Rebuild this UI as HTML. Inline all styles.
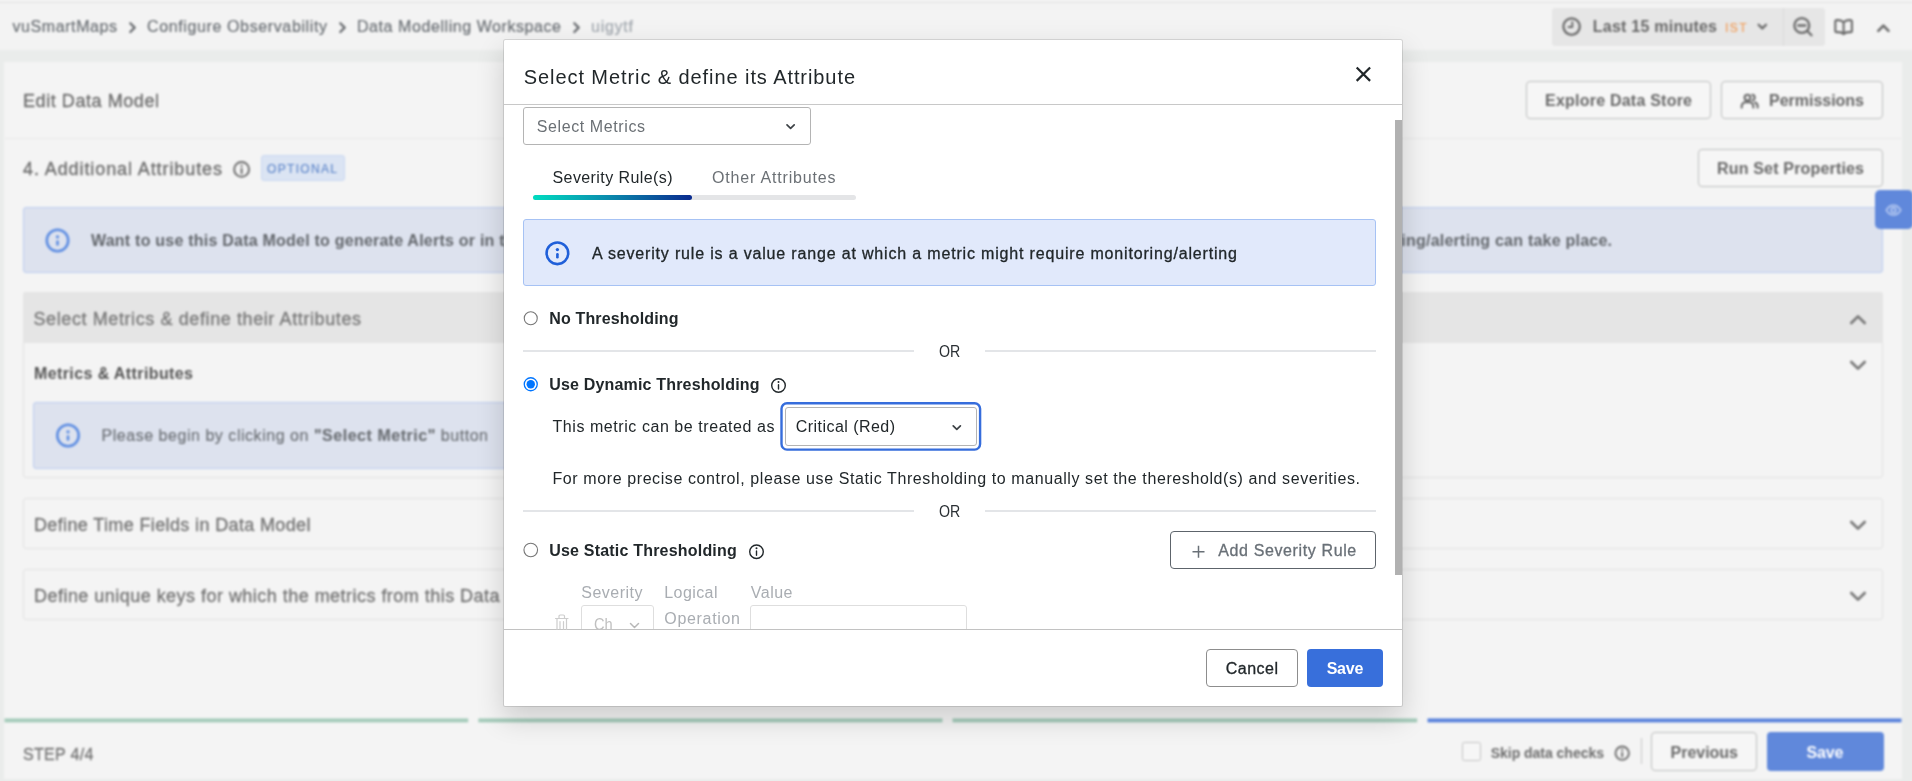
<!DOCTYPE html>
<html lang="en">
<head>
<meta charset="utf-8">
<title>vuSmartMaps - Data Modelling Workspace</title>
<style>
*{box-sizing:border-box}
html,body{margin:0;padding:0}
body{width:1912px;height:781px;overflow:hidden;position:relative;background:#eaeceb;font-family:"Liberation Sans",sans-serif;}
.t{position:absolute;white-space:nowrap;line-height:1;}
.abs{position:absolute}
#bg{position:absolute;left:0;top:0;width:1912px;height:781px;filter:blur(0.85px);}
#bgfill{position:absolute;left:-20px;top:-20px;width:1952px;height:821px;background:#eaeceb}
.topbar{left:-20px;top:-20px;width:1952px;height:69.5px;background:#f3f3f3}
.topline{left:-20px;top:2px;width:1952px;height:1px;background:#e2e2e2}
.timegrp{left:1551.5px;top:7.5px;width:273px;height:38px;background:#e6e6e6;border-radius:3px}
.timesep{left:1782.5px;top:7.5px;width:1px;height:38px;background:#dadada}
.card{left:4px;top:62px;width:1898px;height:717px;background:#f4f4f4}
.hsep{left:5px;top:137.5px;width:1896px;height:1px;background:#e7e7e7}
.btn{border:1px solid #bdbfbe;border-radius:4px;background:#f6f6f6}
.badge{left:261px;top:155px;width:83.500px;height:26px;background:#dbe4f3;border:1px solid #c9d8f2;border-radius:3px}
.banner{background:#dde2ee;border:1px solid #bccdf0;border-radius:3px}
.acc{border:1px solid #e2e2e2;border-radius:3px}
.acchead{left:23px;top:292px;width:1860px;height:51px;background:#e5e5e5;border-radius:3px 3px 0 0}
.prog{top:718px;height:4.4px}
.eye{left:1875px;top:190px;width:37.500px;height:39px;background:#6088db;border-radius:5px}
.chk{left:1462px;top:742px;width:19px;height:19px;border:1px solid #c2c2c2;background:#f6f6f6;border-radius:2.5px}
.vsep{left:1641px;top:738px;width:1px;height:26px;background:#c6c6c6}

#modal{position:absolute;left:503px;top:39px;width:900px;height:668px;background:#fff;border:1px solid rgba(0,0,0,.11);border-radius:2.5px;box-shadow:0 12px 28px rgba(0,0,0,.16);background-clip:padding-box}
#mlayer{position:absolute;left:0;top:0;width:1912px;height:781px;will-change:transform}
.mline{background:#c8c8c8;height:1px;left:504px;width:898px}
.sel{border:1px solid #b4b4b4;border-radius:3px;background:#fff}
.tabbar{left:533px;top:195px;width:323px;height:5px;border-radius:2.5px;background:#e4e5e7}
.tabact{left:533px;top:195px;width:159px;height:5px;border-radius:2.5px;background:linear-gradient(90deg,#00dcc0 0%,#0a8fae 45%,#0a2a8f 100%)}
.info{left:523px;top:219px;width:853px;height:67px;background:#e1e9fb;border:1px solid #a6c2f4;border-radius:3px}
.div{height:2px;background:#e3e5e8}
.scroll{left:1395px;top:120px;width:7px;height:455px;background:#b1b1b1}
.mbtn{border-radius:4px}
</style>
</head>
<body>
<!-- ================= blurred page behind the modal ================= -->
<div id="bg" aria-hidden="true">
  <div id="bgfill"></div>
  <div class="abs topbar"></div>
  <div class="abs topline"></div>
  <div class="abs timegrp"></div>
  <div class="abs timesep"></div>
  <div class="abs card"></div>
  <div class="abs hsep"></div>
  <div class="abs btn" style="left:1526px;top:80.5px;width:184.5px;height:38px"></div>
  <div class="abs btn" style="left:1721px;top:80.5px;width:162px;height:38px"></div>
  <div class="abs btn" style="left:1698px;top:149px;width:185px;height:37.5px"></div>
  <div class="abs badge"></div>
  <div class="abs banner" style="left:23px;top:207px;width:1860px;height:66px"></div>
  <div class="abs acc" style="left:23px;top:292px;width:1860px;height:186px"></div>
  <div class="abs acchead"></div>
  <div class="abs banner" style="left:33px;top:402px;width:900px;height:67px"></div>
  <div class="abs acc" style="left:23px;top:498px;width:1860px;height:51px"></div>
  <div class="abs acc" style="left:23px;top:569px;width:1860px;height:51px"></div>
  <div class="abs chk"></div>
  <div class="abs vsep"></div>
  <div class="abs btn" style="left:1651px;top:732px;width:106px;height:39px"></div>
  <div class="abs" style="left:1767px;top:732px;width:116.500px;height:39px;background:#6088db;border-radius:4px"></div>
  <div class="abs eye"></div>
<span class="t" style="top:19px;font-size:16px;color:#6a6f74;-webkit-text-stroke:0.2px #6a6f74;left:12.50px;letter-spacing:0.580px;">vuSmartMaps</span>
<span class="t" style="top:19px;font-size:16px;color:#6a6f74;-webkit-text-stroke:0.2px #6a6f74;left:147.00px;letter-spacing:0.623px;">Configure Observability</span>
<span class="t" style="top:19px;font-size:16px;color:#6a6f74;-webkit-text-stroke:0.2px #6a6f74;left:357.00px;letter-spacing:0.569px;">Data Modelling Workspace</span>
<span class="t" style="top:19px;font-size:16px;color:#a2a8af;-webkit-text-stroke:0.2px #a2a8af;left:591.00px;letter-spacing:0.750px;">uigytf</span>
<span class="t" style="top:92px;font-size:18px;color:#6c6c6c;-webkit-text-stroke:0.3px #6c6c6c;left:23.00px;letter-spacing:0.566px;">Edit Data Model</span>
<span class="t" style="top:160px;font-size:18px;color:#6c6c6c;-webkit-text-stroke:0.3px #6c6c6c;left:23.00px;letter-spacing:0.908px;">4. Additional Attributes</span>
<span class="t" style="top:163px;font-size:12px;color:#5b84c9;-webkit-text-stroke:0.1px #5b84c9;left:267.00px;letter-spacing:1.330px;">OPTIONAL</span>
<span class="t" style="top:233px;font-size:16px;color:#63676c;font-weight:700;left:91.00px;letter-spacing:0.227px;">Want to use this Data Model to generate Alerts or in the</span>
<span class="t" style="top:310px;font-size:18px;color:#787878;-webkit-text-stroke:0.3px #787878;left:33.50px;letter-spacing:0.599px;">Select Metrics &amp; define their Attributes</span>
<span class="t" style="top:366px;font-size:16px;color:#555555;font-weight:700;left:34.00px;letter-spacing:0.398px;">Metrics &amp; Attributes</span>
<span class="t" style="top:428px;font-size:16px;color:#6b6f74;-webkit-text-stroke:0.15px #6b6f74;left:101.50px;letter-spacing:0.535px;">Please begin by clicking on <b>"Select Metric"</b> button</span>
<span class="t" style="top:516px;font-size:18px;color:#737373;-webkit-text-stroke:0.3px #737373;left:34.00px;letter-spacing:0.367px;">Define Time Fields in Data Model</span>
<span class="t" style="top:587px;font-size:18px;color:#737373;-webkit-text-stroke:0.3px #737373;left:34.00px;letter-spacing:0.469px;">Define unique keys for which the metrics from this Data Model</span>
<span class="t" style="top:747px;font-size:16px;color:#757575;-webkit-text-stroke:0.3px #757575;left:23.00px;letter-spacing:0.330px;">STEP 4/4</span>
<span class="t" style="top:19px;font-size:16px;color:#686868;font-weight:700;left:1592.75px;letter-spacing:0.237px;">Last 15 minutes</span>
<span class="t" style="top:22px;font-size:12px;color:#f29c55;-webkit-text-stroke:0.15px #f29c55;left:1725.00px;letter-spacing:1.414px;">IST</span>
<span class="t" style="top:93px;font-size:16px;color:#686868;font-weight:700;left:1545.00px;letter-spacing:0.226px;">Explore Data Store</span>
<span class="t" style="top:93px;font-size:16px;color:#686868;font-weight:700;left:1769.00px;letter-spacing:-0.016px;">Permissions</span>
<span class="t" style="top:161px;font-size:16px;color:#686868;font-weight:700;left:1717.00px;letter-spacing:0.175px;">Run Set Properties</span>
<span class="t" style="top:746px;font-size:14px;color:#6c6c6c;font-weight:700;left:1490.70px;letter-spacing:-0.022px;">Skip data checks</span>
<span class="t" style="top:745px;font-size:16px;color:#6a6a6a;font-weight:700;left:1670.60px;letter-spacing:-0.028px;">Previous</span>
<span class="t" style="top:745px;font-size:16px;color:#ffffff;font-weight:700;left:1806.60px;letter-spacing:-0.158px;">Save</span>
<span class="t" style="top:233px;font-size:16px;color:#63676c;font-weight:700;right:299.77px;letter-spacing:0.227px;">monitoring/alerting can take place.</span>
  <svg class="abs" style="left:0;top:0" width="1912" height="781" viewBox="0 0 1912 781" fill="none" stroke-linecap="round" stroke-linejoin="round">
    <!-- step progress bars -->
    <g stroke="none"><rect x="4.5" y="718.4" width="463.7" height="4" fill="#a6ccbb"/><rect x="478.3" y="718.4" width="464.2" height="4" fill="#a6ccbb"/><rect x="952.5" y="718.4" width="464.7" height="4" fill="#a6ccbb"/><rect x="1427.5" y="718.4" width="474" height="4" fill="#5a83dc"/></g>
    <!-- breadcrumb chevrons -->
    <g stroke="#6b6e72" stroke-width="2.300">
      <path d="M130.300 23.200l4.400 4.400-4.400 4.400"/><path d="M340.300 23.200l4.400 4.400-4.400 4.400"/><path d="M574.300 23.200l4.400 4.400-4.400 4.400"/>
    </g>
    <!-- clock -->
    <g stroke="#6b6b6b" stroke-width="2.3"><circle cx="1571.6" cy="26.6" r="8.2"/><path d="M1572.3 22.300v4.700h-3.800" stroke-width="1.900"/></g>
    <!-- small chevron -->
    <path d="M1758.600 24.700l3.700 3.700 3.700-3.700" stroke="#6b6b6b" stroke-width="2.300"/>
    <!-- zoom out -->
    <g stroke="#6b6b6b" stroke-width="2.300"><circle cx="1801.800" cy="25.500" r="7.400"/><path d="M1798.200 25.500h7.200M1807.300 31l4.200 4.200"/></g>
    <!-- book -->
    <g stroke="#6b6b6b" stroke-width="2.100"><path d="M1843.600 22.300v12M1843.600 22.300c-1.200-1.500-3-2.200-5.200-2.200h-1.500a1.600 1.600 0 0 0-1.600 1.600v9.200a1.200 1.200 0 0 0 1.200 1.200h2.200c2 0 3.700.600 4.900 2 1.200-1.400 2.900-2 4.900-2h2.200a1.200 1.200 0 0 0 1.200-1.200v-9.200a1.600 1.600 0 0 0-1.600-1.600h-1.500c-2.200 0-4 .700-5.200 2.200z"/></g>
    <!-- chevron up -->
    <path d="M1878.300 30.800l5.100-5.100 5.100 5.100" stroke="#6b6b6b" stroke-width="2.600"/>
    <!-- permissions users icon -->
    <g stroke="#6b6b6b" stroke-width="2.1"><circle cx="1747.5" cy="97.6" r="2.9"/><path d="M1741.700 107.600v-1.200a4.300 4.300 0 0 1 4.300-4.300h3a4.300 4.300 0 0 1 4.300 4.300v1.200"/><path d="M1752.500 94.800a2.900 2.900 0 0 1 0 5.600M1755 102.500a4 4 0 0 1 2.600 3.800v1.300"/></g>
    <!-- info icon next to heading -->
    <g stroke="#6e6e6e" stroke-width="2"><circle cx="241.600" cy="169.400" r="7.400"/><path d="M241.600 168.800v4.400"/></g><circle cx="241.600" cy="165.800" r="1.150" fill="#6e6e6e"/>
    <!-- banner info icons -->
    <g stroke="#5d8de2" stroke-width="2.600"><circle cx="57.500" cy="240.500" r="10.700"/><path d="M57.500 241.500v2.900"/></g><circle cx="57.500" cy="236.800" r="1.650" fill="#5d8de2"/>
    <g stroke="#5d8de2" stroke-width="2.600"><circle cx="68" cy="435.500" r="10.700"/><path d="M68 436.500v2.900"/></g><circle cx="68" cy="431.800" r="1.650" fill="#5d8de2"/>
    <!-- accordion chevrons -->
    <g stroke="#777" stroke-width="2.600">
      <path d="M1851.300 323l6.700-6.700 6.700 6.700"/>
      <path d="M1851.300 362l6.700 6.700 6.700-6.700"/>
      <path d="M1851.300 522l6.700 6.700 6.700-6.700"/>
      <path d="M1851.300 593l6.700 6.700 6.700-6.700"/>
    </g>
    <!-- eye -->
    <g stroke="#b6c9f1" stroke-width="1.700"><path d="M1886.300 210.200c1.800-3.200 4.300-4.800 7.200-4.800s5.400 1.600 7.200 4.800c-1.800 3.200-4.300 4.800-7.200 4.800s-5.400-1.600-7.200-4.800z"/><circle cx="1893.500" cy="210.200" r="2.300"/></g>
    <!-- footer info icon -->
    <g stroke="#707070" stroke-width="1.900"><circle cx="1622.200" cy="753.200" r="6.700"/><path d="M1622.200 752.700v3.900"/></g><circle cx="1622.200" cy="749.900" r="1.050" fill="#707070"/>
  </svg>
</div>

<!-- ================= modal dialog ================= -->
<div id="modal"></div>
<div id="mlayer" role="dialog" aria-modal="true" aria-label="Select Metric &amp; define its Attribute">
  <div class="abs mline" style="top:104px"></div>
  <div class="abs mline" style="top:629px;background:#c2c2c2"></div>
  <div class="abs sel" style="left:523px;top:107px;width:288px;height:38px"></div>
  <div class="abs tabbar"></div><div class="abs tabact"></div>
  <div class="abs info"></div>
  <div class="abs div" style="left:523px;top:350px;width:391px"></div><div class="abs div" style="left:985px;top:350px;width:391px"></div>
  <div class="abs div" style="left:523px;top:510px;width:391px"></div><div class="abs div" style="left:985px;top:510px;width:391px"></div>
  <div class="abs sel" style="left:785px;top:407px;width:192px;height:39px"></div>
  <div class="abs mbtn" style="left:1170px;top:531px;width:206px;height:38px;border:1px solid #5d646b;background:#fff"></div>
  <div class="abs" style="left:504px;top:600px;width:891px;height:29px;overflow:hidden">
    <div class="abs" style="left:77px;top:5px;width:73px;height:40px;border:1px solid #dedede;border-radius:3px"></div>
    <div class="abs" style="left:246px;top:5px;width:216.500px;height:40px;border:1px solid #dedede;border-radius:3px"></div>
  </div>
  <div class="abs scroll"></div>
  <div class="abs mbtn" style="left:1206px;top:649px;width:92px;height:38px;border:1px solid #8d8d8d;background:#fff"></div>
  <div class="abs mbtn" style="left:1307px;top:649px;width:76px;height:38px;background:#386fdb"></div>
<span class="t" style="top:67px;font-size:20px;color:#21272a;left:523.75px;letter-spacing:0.921px;">Select Metric &amp; define its Attribute</span>
<span class="t" style="top:119px;font-size:16px;color:#6b7075;left:536.75px;letter-spacing:0.599px;">Select Metrics</span>
<span class="t" style="top:170px;font-size:16px;color:#21272a;left:552.50px;letter-spacing:0.412px;">Severity Rule(s)</span>
<span class="t" style="top:170px;font-size:16px;color:#6b7075;left:712.00px;letter-spacing:0.822px;">Other Attributes</span>
<span class="t" style="top:246px;font-size:16px;color:#21272a;-webkit-text-stroke:0.3px #21272a;left:592.00px;letter-spacing:0.828px;">A severity rule is a value range at which a metric might require monitoring/alerting</span>
<span class="t" style="top:311px;font-size:16px;color:#21272a;font-weight:700;left:549.25px;letter-spacing:0.153px;">No Thresholding</span>
<span class="t" style="top:344px;font-size:16px;color:#2b3034;transform:scaleX(0.8854);transform-origin:0 50%;left:938.75px;letter-spacing:0.000px;">OR</span>
<span class="t" style="top:377px;font-size:16px;color:#21272a;font-weight:700;left:549.25px;letter-spacing:0.173px;">Use Dynamic Thresholding</span>
<span class="t" style="top:419px;font-size:16px;color:#21272a;left:552.50px;letter-spacing:0.560px;">This metric can be treated as</span>
<span class="t" style="top:419px;font-size:16px;color:#21272a;left:795.75px;letter-spacing:0.454px;">Critical (Red)</span>
<span class="t" style="top:471px;font-size:16px;color:#21272a;left:552.50px;letter-spacing:0.596px;">For more precise control, please use Static Thresholding to manually set the thereshold(s) and severities.</span>
<span class="t" style="top:504px;font-size:16px;color:#2b3034;transform:scaleX(0.8854);transform-origin:0 50%;left:938.75px;letter-spacing:0.000px;">OR</span>
<span class="t" style="top:543px;font-size:16px;color:#21272a;font-weight:700;left:549.25px;letter-spacing:0.198px;">Use Static Thresholding</span>
<span class="t" style="top:543px;font-size:16px;color:#697077;-webkit-text-stroke:0.3px #697077;left:1218.25px;letter-spacing:0.621px;">Add Severity Rule</span>
<span class="t" style="top:585px;font-size:16px;color:#a9adb2;left:581.25px;letter-spacing:0.493px;">Severity</span>
<span class="t" style="top:585px;font-size:16px;color:#a9adb2;left:664.25px;letter-spacing:0.424px;">Logical</span>
<span class="t" style="top:611px;font-size:16px;color:#a9adb2;left:664.25px;letter-spacing:0.686px;">Operation</span>
<span class="t" style="top:585px;font-size:16px;color:#a9adb2;left:750.75px;letter-spacing:0.504px;">Value</span>
<span class="t" style="top:617px;font-size:16px;color:#c0c0c0;transform:scaleX(0.9167);transform-origin:0 50%;left:594.25px;letter-spacing:0.000px;">Ch</span>
<span class="t" style="top:661px;font-size:16px;color:#21272a;-webkit-text-stroke:0.3px #21272a;left:1225.80px;letter-spacing:0.478px;">Cancel</span>
<span class="t" style="top:661px;font-size:16px;color:#ffffff;font-weight:700;left:1326.70px;letter-spacing:-0.258px;">Save</span>
  <div class="abs" style="left:504px;top:630px;width:891px;height:12px;background:#fff"></div>
  <svg class="abs" style="left:0;top:0" width="1912" height="781" viewBox="0 0 1912 781" fill="none" stroke-linecap="round" stroke-linejoin="round">
    <!-- close -->
    <path d="M1356.700 67.500l13.400 13.400M1370.100 67.500l-13.400 13.400" stroke="#21272a" stroke-width="2.200" stroke-linecap="butt"/>
    <!-- select chevrons -->
    <path d="M787 124.800l3.600 3.600 3.600-3.600" stroke="#3d4246" stroke-width="1.700"/>
    <path d="M953.200 425.800l3.600 3.600 3.600-3.600" stroke="#3d4246" stroke-width="1.700"/>
    <!-- focus ring -->
    <rect x="781.500" y="403.300" width="198.600" height="46.300" rx="5.500" stroke="#366ddc" stroke-width="2.400"/>
    <!-- info icon in alert -->
    <g stroke="#1f5fd9" stroke-width="2.600"><circle cx="557.400" cy="253.300" r="10.800"/><path d="M557.400 254.300v2.900"/></g><circle cx="557.400" cy="249.600" r="1.650" fill="#1f5fd9"/>
    <!-- radios -->
    <circle cx="530.750" cy="318.250" r="6.500" fill="#fff" stroke="#767676" stroke-width="1.100"/>
    <circle cx="530.750" cy="384.250" r="6.500" fill="#fff" stroke="#0075ff" stroke-width="1.300"/><circle cx="530.750" cy="384.250" r="4.200" fill="#0075ff"/>
    <circle cx="530.750" cy="550" r="6.800" fill="#fff" stroke="#767676" stroke-width="1.100"/>
    <!-- info icons by labels -->
    <g stroke="#21272a" stroke-width="1.400"><circle cx="778.500" cy="385.500" r="6.800"/><path d="M778.500 384.800v4.200"/></g><circle cx="778.500" cy="382" r="1" fill="#21272a"/>
    <g stroke="#21272a" stroke-width="1.400"><circle cx="756.500" cy="551.750" r="6.800"/><path d="M756.500 551v4.200"/></g><circle cx="756.500" cy="548.250" r="1" fill="#21272a"/>
    <!-- plus -->
    <path d="M1192.500 551.800h12M1198.500 545.800v12" stroke="#697077" stroke-width="1.500" stroke-linecap="butt"/>
    <!-- trash (clipped by footer) -->
    <g stroke="#cdcdcd" stroke-width="1.200"><path d="M555.500 618.500h12.500M559 618.500v-2.300a1.200 1.200 0 0 1 1.200-1.200h3.100a1.200 1.200 0 0 1 1.200 1.200v2.300M557 618.500v11M566.500 618.500v11M560 621.500v7.500M563.500 621.500v7.500"/>
    <path d="M630.500 623.500l4 4 4-4" stroke="#b8b8b8" stroke-width="1.500"/></g>
  </svg>
  <div class="abs" style="left:504px;top:630px;width:898px;height:1px;background:#fff"></div>
</div>
</body>
</html>
